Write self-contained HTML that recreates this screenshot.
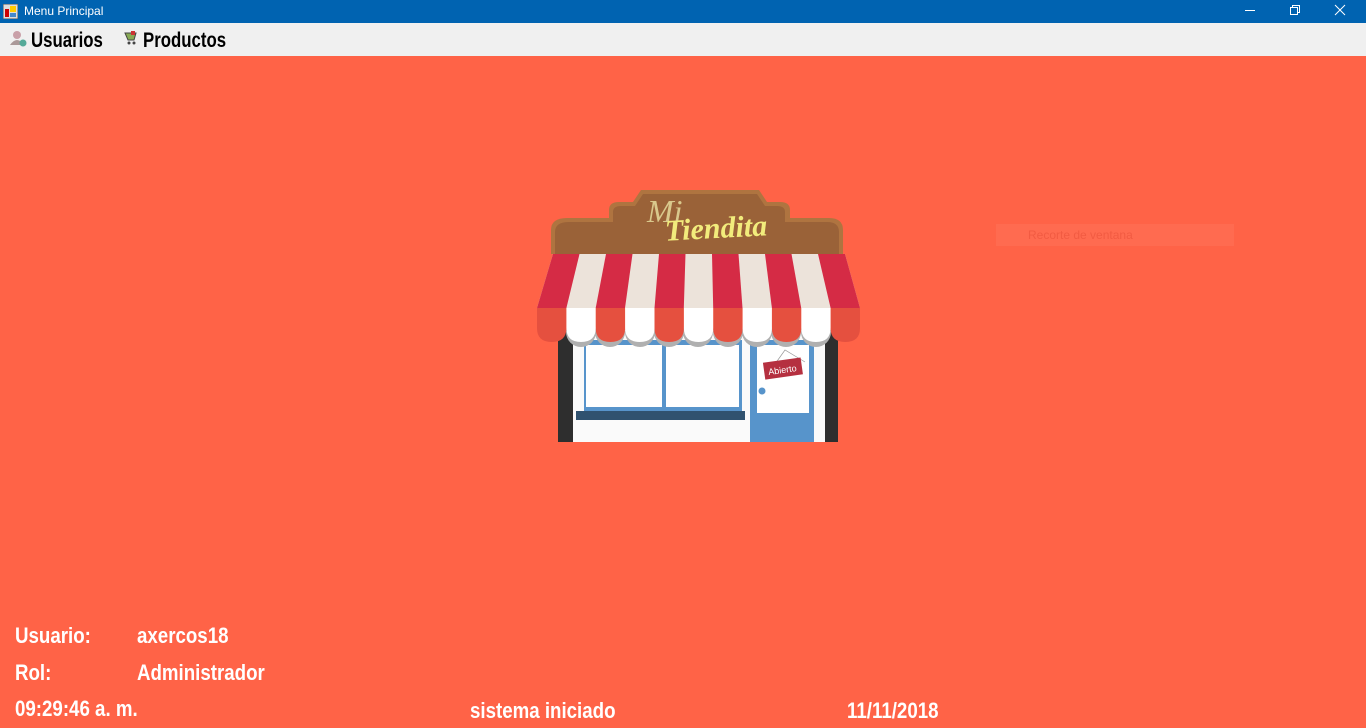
<!DOCTYPE html>
<html><head><meta charset="utf-8"><style>
*{margin:0;padding:0;box-sizing:border-box}
body{width:1366px;height:728px;overflow:hidden;background:#FF6347;font-family:"Liberation Sans",sans-serif;position:relative}
#title{position:absolute;left:0;top:0;width:1366px;height:23px;background:#0063B1;color:#fff;font-size:12px}
#title span{position:absolute;left:24px;top:4px}
#menu{position:absolute;left:0;top:23px;width:1366px;height:33px;background:#F0F0F0}
.mi{position:absolute;top:6px;font-weight:bold;font-size:21px;color:#000;transform:scaleX(0.8);transform-origin:0 0;white-space:nowrap}
.t{position:absolute;color:#fff;font-size:22px;font-weight:bold;white-space:nowrap;transform:scaleX(0.85);transform-origin:0 0}
</style></head><body>
<div id="title">
<svg style="position:absolute;left:3px;top:4px" width="15" height="15"><rect x="0" y="0" width="15" height="15" fill="#ddd" stroke="#555"/><rect x="2" y="5" width="4" height="8" fill="#c00"/><rect x="7" y="2" width="6" height="6" fill="#fc0"/><rect x="7" y="9" width="6" height="4" fill="#48c"/></svg>
<span>Menu Principal</span>
<svg style="position:absolute;left:1244px;top:4px" width="110" height="15" stroke="#fff" fill="none" stroke-width="1"><line x1="1" y1="6.5" x2="11" y2="6.5"/><rect x="46.5" y="3.5" width="7" height="7"/><path d="M48.5 3.5V1.5H55.5V8.5H53.5"/><path d="M91 1L101 11M101 1L91 11"/></svg>
</div>
<div id="menu">
<svg style="position:absolute;left:9px;top:6px" width="18" height="18"><circle cx="8" cy="6" r="4" fill="#c9a0a8"/><path d="M1 16Q8 6 15 16Z" fill="#a99"/><circle cx="14" cy="14" r="3.5" fill="#5a9"/></svg>
<div class="mi" style="left:31px">Usuarios</div>
<svg style="position:absolute;left:123px;top:7px" width="16" height="16"><path d="M2 3L13 3L11 10L5 10Z" fill="#8a5" stroke="#444"/><circle cx="6" cy="13" r="1.5" fill="#444"/><circle cx="11" cy="13" r="1.5" fill="#444"/><rect x="8" y="1" width="4" height="4" fill="#c33"/></svg>
<div class="mi" style="left:143px">Productos</div>
</div>

<svg style="position:absolute;left:537px;top:190px" width="323" height="252" viewBox="0 0 323 252">
<path d="M14 64V40Q14 28 30 28H72V20Q72 12 82 12H96L104 0H222L230 12H243Q253 12 253 20V28H292Q306 28 306 40V64Z" fill="#AF7440"/>
<path d="M18 64V42Q18 32 32 32H76V22Q76 16 84 16H98L106 4H220L228 16H240Q248 16 248 22V32H290Q302 32 302 42V64Z" fill="#9A6238"/>
<text x="110" y="32" font-family="Liberation Serif,serif" font-style="italic" font-size="32" fill="#D9C88C">Mi</text>
<text x="128" y="48" font-family="Liberation Serif,serif" font-style="italic" font-weight="bold" font-size="30" fill="#F2EC7C" transform="rotate(-3 180 40)">Tiendita</text>
<rect x="21" y="140" width="280" height="112" fill="#2E2E2E"/>
<rect x="36" y="140" width="252" height="112" fill="#FAFAFA"/>
<rect x="47" y="150" width="158" height="72" fill="#5794CB"/>
<rect x="49" y="155" width="76" height="62" fill="#fff"/><rect x="129" y="155" width="73" height="62" fill="#fff"/>
<rect x="39" y="221" width="169" height="9" fill="#30526F"/>
<rect x="213" y="150" width="64" height="102" fill="#5794CB"/>
<rect x="220" y="155" width="52" height="68" fill="#fff"/>
<circle cx="225" cy="201" r="3.5" fill="#5794CB"/>
<path d="M238 174L248 160L268 172" stroke="#999" fill="none" stroke-width=".7"/>
<g transform="rotate(-8 246 179)"><rect x="227" y="170" width="38" height="17" fill="#B53040"/><text x="231" y="183" font-size="9" fill="#fff" font-family="Liberation Sans,sans-serif">Abierto</text></g>
<g fill="#B0B0B0">
<circle cx="44" cy="142" r="15"/><circle cx="73" cy="142" r="15"/><circle cx="103" cy="142" r="15"/><circle cx="132" cy="142" r="15"/><circle cx="161" cy="142" r="15"/><circle cx="191" cy="142" r="15"/><circle cx="220" cy="142" r="15"/><circle cx="249" cy="142" r="15"/><circle cx="279" cy="142" r="15"/>
</g>
<path d="M16 64H308L323 118H0Z" fill="#ECE3DA"/>
<g fill="#D52B45">
<path d="M16 64H42.5L29.4 118H0Z"/>
<path d="M69 64H95.5L88 118H58.7Z"/>
<path d="M122 64H148.5L146.8 118H117.5Z"/>
<path d="M175 64H201.5L205.5 118H176.2Z"/>
<path d="M228 64H254.5L264.2 118H234.9Z"/>
<path d="M281 64H308L323 118H293.6Z"/>
</g>
<g fill="#E5503F">
<path d="M0 118H29.4V138Q29.4 152 14.7 152Q0 152 0 138Z"/>
<path d="M58.7 118H88.1V138Q88.1 152 73.4 152Q58.7 152 58.7 138Z"/>
<path d="M117.5 118H146.9V138Q146.9 152 132.2 152Q117.5 152 117.5 138Z"/>
<path d="M176.2 118H205.6V138Q205.6 152 190.9 152Q176.2 152 176.2 138Z"/>
<path d="M234.9 118H264.3V138Q264.3 152 249.6 152Q234.9 152 234.9 138Z"/>
<path d="M293.6 118H323V138Q323 152 308.3 152Q293.6 152 293.6 138Z"/>
</g>
<g fill="#fff">
<path d="M29.4 118H58.7V138Q58.7 152 44 152Q29.4 152 29.4 138Z"/>
<path d="M88.1 118H117.5V138Q117.5 152 102.8 152Q88.1 152 88.1 138Z"/>
<path d="M146.9 118H176.2V138Q176.2 152 161.5 152Q146.9 152 146.9 138Z"/>
<path d="M205.6 118H234.9V138Q234.9 152 220.2 152Q205.6 152 205.6 138Z"/>
<path d="M264.3 118H293.6V138Q293.6 152 278.9 152Q264.3 152 264.3 138Z"/>
</g>
</svg>

<div style="position:absolute;left:996px;top:224px;width:238px;height:22px;background:#FF6B50"></div>
<div style="position:absolute;left:1028px;top:228px;font-size:12px;color:#F25B42">Recorte de ventana</div>

<div class="t" style="left:15px;top:623px">Usuario:</div>
<div class="t" style="left:137px;top:623px">axercos18</div>
<div class="t" style="left:15px;top:660px">Rol:</div>
<div class="t" style="left:137px;top:660px">Administrador</div>
<div class="t" style="left:15px;top:696px">09:29:46 a. m.</div>
<div class="t" style="left:470px;top:698px">sistema iniciado</div>
<div class="t" style="left:847px;top:698px">11/11/2018</div>
</body></html>
